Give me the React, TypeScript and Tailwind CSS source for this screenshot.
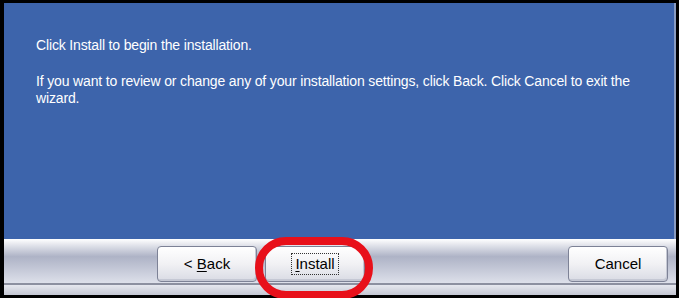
import React from 'react';

const XpButton = ({ children, focused = false }: { children: React.ReactNode; focused?: boolean }) => (
  <button
    className="w-[100px] h-[36px] rounded-[4px] border border-[#7d8296] bg-gradient-to-b from-[#ffffff] via-[#f1f1f4] to-[#d9dbe4] text-[15px] text-black flex items-center justify-center shadow-[inset_-1px_-2px_0_#c5c8d4]"
  >
    {focused ? (
      <span className="border border-dotted border-[#333] px-[3px] leading-[20px]">{children}</span>
    ) : (
      <span className="leading-[20px]">{children}</span>
    )}
  </button>
);

const App = () => {
  return (
    <div className="w-[679px] h-[298px] bg-black pt-[3px] pl-[4px] pr-[3px] pb-[3px] font-['Liberation_Sans',Arial,sans-serif]">
      <div className="relative flex flex-col h-full">
        {/* main panel */}
        <div className="h-[236px] bg-[#3d64ab] border-r-2 border-[#8a9cc0] pl-[32px] pr-[4px] pt-[34px] text-white text-[14px] leading-[17px] tracking-[-0.15px]">
          <p>Click Install to begin the installation.</p>
          <p className="mt-[19px]">
            If you want to review or change any of your installation settings, click Back. Click Cancel to exit the wizard.
          </p>
        </div>

        {/* button bar */}
        <div className="flex-1 flex flex-col">
          <div className="h-[44px] bg-gradient-to-b from-[#ffffff] via-[#aeb3c6] via-40% to-[#dde0ea] flex items-end pb-[1px]">
            <div className="flex items-center w-full pl-[153px] pr-[8px]">
              <XpButton>
                &lt; <span className="underline underline-offset-2">B</span>ack
              </XpButton>
              <div className="ml-[8px]">
                <XpButton focused>
                  <span className="underline underline-offset-2">I</span>nstall
                </XpButton>
              </div>
              <div className="ml-auto">
                <XpButton>Cancel</XpButton>
              </div>
            </div>
          </div>
          <div className="h-[2px] bg-[#8c90a0]" />
          <div className="flex-1 bg-gradient-to-b from-[#e6e8ef] to-[#c4c7d3]" />
        </div>

        {/* red highlight ring */}
        <div className="absolute left-[251px] top-[234px] w-[118px] h-[62px] rounded-full border-[8px] border-[#e8101a]" />
      </div>
    </div>
  );
};

export default App;
